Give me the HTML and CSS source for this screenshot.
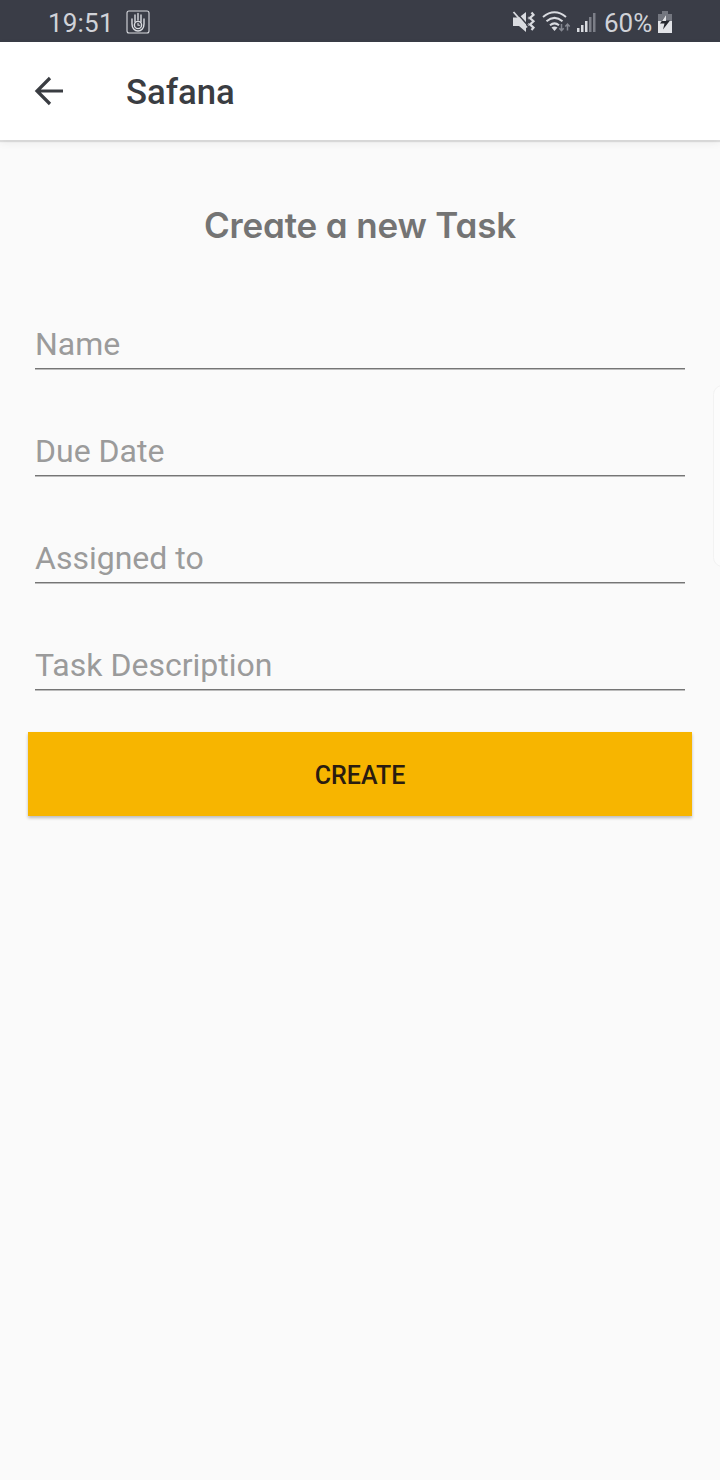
FILE: index.html
```html
<!DOCTYPE html>
<html lang="en">
<head>
<meta charset="utf-8">
<title>Safana</title>
<link rel="stylesheet" href="styles.css">
</head>
<body>
<div class="status">
  <span class="clock">19:51</span>
  <svg class="hand" width="24" height="24" viewBox="0 0 24 24" fill="none" stroke="#d9dbe0" stroke-width="1.4" stroke-linecap="round">
    <rect x="1" y="1" width="22" height="22" rx="2" stroke-width="1.1"/>
    <path d="M9 12V5M12 10V3.500M15 12V5M6 9v5c0 4 2.500 7 6 7s6-3 6-7V9"/>
    <circle cx="12" cy="15" r="3.600"/>
    <path d="M12 13.300V15.300h1.700" stroke-width="1.100"/>
  </svg>
  <svg class="mute" width="24" height="24" viewBox="0 0 24 24">
    <path d="M1 7.500h6L14 2v20l-7-6H1z" fill="#d9dbe0"/>
    <path d="M3.500 1.500L15.500 15" stroke="#3a3d47" stroke-width="1.500"/>
    <path d="M1.500 2L15 17.500" stroke="#d9dbe0" stroke-width="1.800"/>
    <path d="M19.500 2.500l2 2.300-3.500 3.200 3.500 3.200-3.500 3.200 3.500 3.200-2 2.400" fill="none" stroke="#d9dbe0" stroke-width="2.200"/>
    <path d="M17 6.500l-1 1.500 1 1.500M17 13l-1 1.500 1 1.500" fill="none" stroke="#a9abb2" stroke-width="1"/>
  </svg>
  <svg class="wifi" width="30" height="24" viewBox="0 0 30 24" fill="none" stroke="#d9dbe0" stroke-width="2">
    <path d="M1 7Q12.500-2.500 24 7M4.500 11.300Q12.500 4.500 20.500 11.300M8 15.300Q12.500 11.500 17 15.300"/>
    <path d="M9.500 17.500Q12.500 15.500 15.500 17.500L12.500 21z" fill="#d9dbe0" stroke="none"/>
    <path d="M19.500 14v6.500M17.300 18.300l2.200 2.400 2.200-2.400M25.500 20.500V14M23.300 16.500l2.200-2.400 2.200 2.400" stroke="#858891" stroke-width="1.500"/>
  </svg>
  <svg class="signal" width="19" height="22" viewBox="0 0 19 22">
    <path d="M0 17h2.500v4H0zM4 14h2.500v7H4zM8 10h2.500v11H8z" fill="#d9dbe0"/>
    <path d="M12 6h2.500v15H12zM16 2h2.500v19H16z" fill="#7c7f88"/>
  </svg>
  <span class="percent">60%</span>
  <svg class="battery" width="14" height="22" viewBox="0 0 14 22">
    <path d="M4 0h6v3h4v7H0V3h4z" fill="#747780"/>
    <path d="M0 10h14v12H0z" fill="#e2e3e7"/>
    <path d="M8 4L2 12.500h4.500L5 18.500l7-9H8z" fill="#25272e"/>
    <path d="M8 4L4 10h4z" fill="#e2e3e7"/>
  </svg>
</div>
<header class="toolbar">
  <svg class="back" width="30" height="30" viewBox="0 0 30 30" fill="none" stroke="#3a3d42" stroke-width="3.200">
    <path d="M29 15H3M16 2L3 15l13 13"/>
  </svg>
  <span class="title">Safana</span>
</header>
<main class="content">
  <h1 class="heading">Create a new Task</h1>
  <div class="field">Name</div>
  <div class="field">Due Date</div>
  <div class="field">Assigned to</div>
  <div class="field">Task Description</div>
  <button class="create">CREATE</button>
</main>
<div class="edge-handle"></div>
</body>
</html>
```
FILE: styles.css
```css
* { box-sizing: border-box; }
body {
  margin: 0;
  height: 1480px;
  background: #fafafa;
  font-family: Roboto, sans-serif;
  position: relative;
  overflow: hidden;
}
.status {
  display: flex;
  align-items: center;
  height: 42px;
  padding: 2px 48px 0;
  background: #3a3d47;
  color: #d0d2d8;
  font-size: 26px;
}
.clock { width: 66px; padding-top: 2px; letter-spacing: .2px; line-height: 40px; }
.hand { margin-left: 12px; }
.mute { margin-left: auto; }
.wifi { margin-left: 6px; }
.signal { margin-left: 5px; }
.percent { margin-left: 8px; width: 49px; padding-top: 2px; line-height: 40px; }
.battery { margin-left: 5px; }
.toolbar {
  display: flex;
  align-items: center;
  height: 98px;
  padding-left: 34px;
  background: #fff;
  box-shadow: 0 2px 1px rgba(0, 0, 0, .1), 0 3px 8px rgba(0, 0, 0, .06);
}
.title {
  margin-left: 62px;
  padding-top: 2px;
  color: #3a3d42;
  font-size: 34.7px;
  font-weight: 500;
}
.content { padding: 61px 28px 0; }
.heading {
  margin: 0 0 65px;
  height: 48px;
  line-height: 48px;
  text-align: center;
  color: #747474;
  font-family: Inter, sans-serif;
  font-size: 35px;
  font-weight: 600;
  letter-spacing: -.15px;
  font-feature-settings: "cv11";
}
.field {
  height: 56px;
  margin: 0 7px 51px;
  background: linear-gradient(#757575, #757575) 0 54px / 100% 1px no-repeat;
  border-bottom: 1px solid #bcbcbc;
  color: #9b9b9b;
  font-size: 32px;
  line-height: 60px;
  white-space: nowrap;
}
.create {
  display: block;
  width: 100%;
  height: 84px;
  margin-top: -10px;
  padding: 3px 0 0;
  border: 0;
  background: #f7b500;
  box-shadow: 0 2px 3px rgba(0, 0, 0, .25);
  color: #2a1c10;
  font: 500 25px Roboto, sans-serif;
}
.edge-handle {
  position: absolute;
  top: 385px;
  right: -12px;
  width: 19px;
  height: 182px;
  border: 1px solid #f2f2f2;
  border-radius: 10px;
  background: #fcfcfc;
}
```
